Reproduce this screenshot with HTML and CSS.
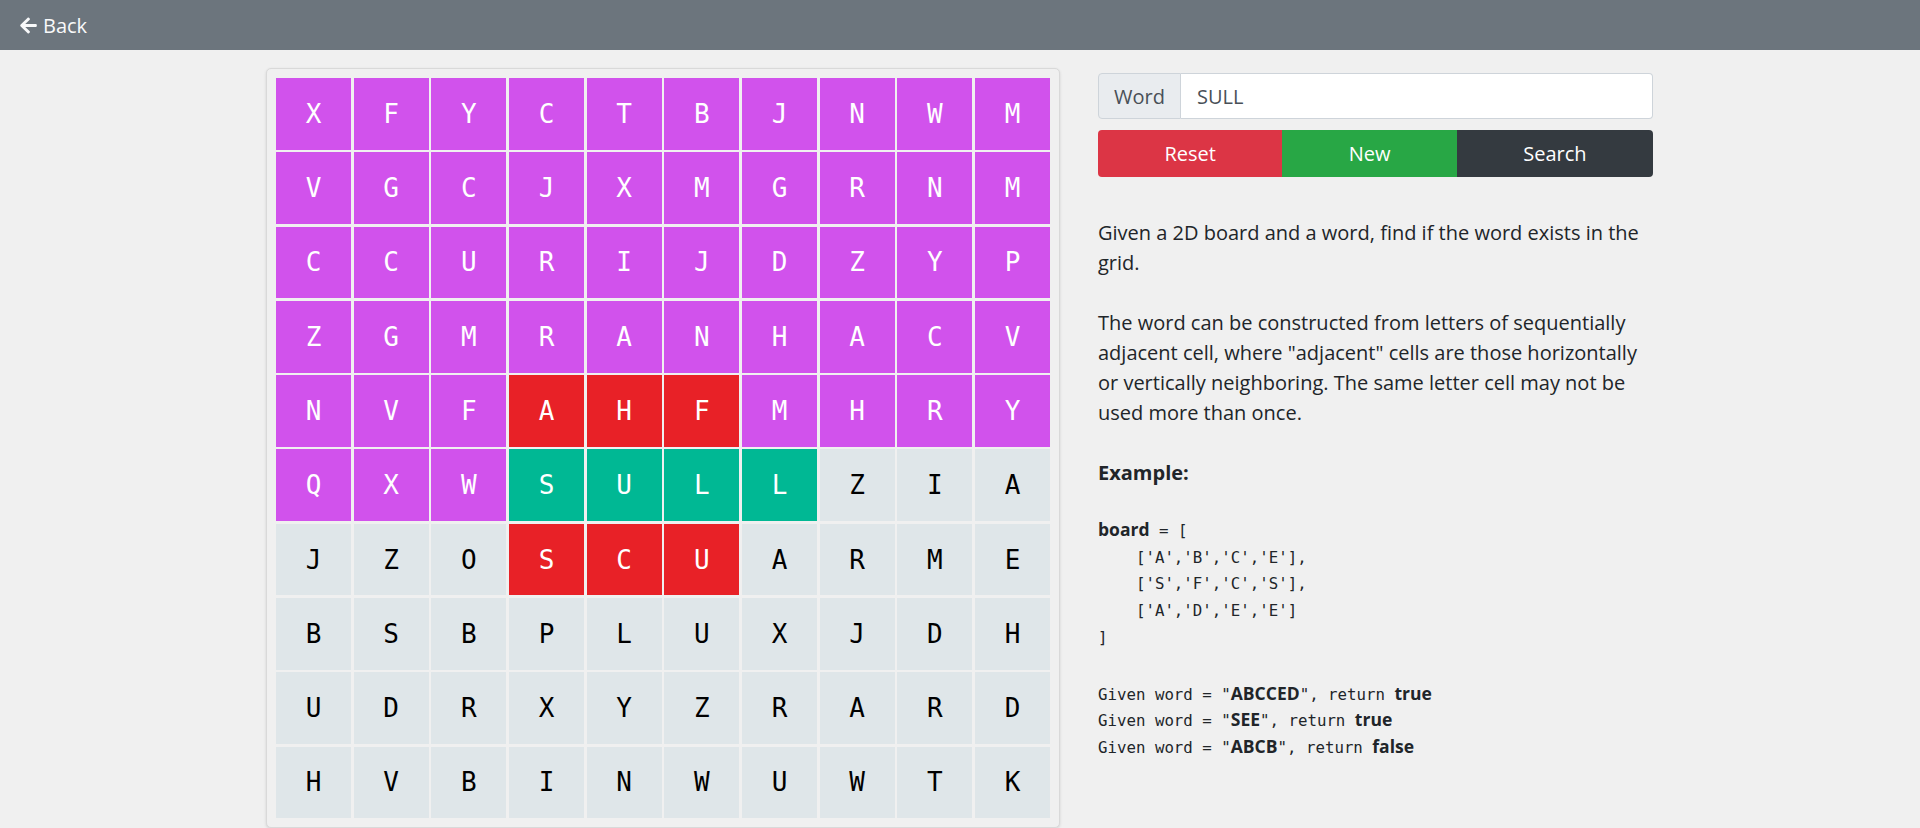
FILE: index.html
```html
<!DOCTYPE html>
<html lang="en">
<head>
<meta charset="utf-8">
<title>Word Search</title>
<link rel="stylesheet" href="styles.css">
</head>
<body>
<nav class="navbar">
  <a class="back" href="#"><svg class="back-icon" viewBox="0 0 448 512" aria-hidden="true"><path d="M257.5 445.1l-22.2 22.2c-9.4 9.4-24.6 9.4-33.9 0L7 273c-9.4-9.4-9.4-24.6 0-33.9L201.4 44.7c9.4-9.4 24.6-9.4 33.9 0l22.2 22.2c9.5 9.5 9.3 25-.4 34.3L136.6 216H424c13.3 0 24 10.7 24 24v32c0 13.3-10.7 24-24 24H136.6l120.5 114.8c9.8 9.3 10 24.8.4 34.3z"/></svg>Back</a>
</nav>
<main class="main">
  <section class="board-card">
    <div class="board">
      <div class="cell p">X</div><div class="cell p">F</div><div class="cell p">Y</div><div class="cell p">C</div><div class="cell p">T</div><div class="cell p">B</div><div class="cell p">J</div><div class="cell p">N</div><div class="cell p">W</div><div class="cell p">M</div>
      <div class="cell p">V</div><div class="cell p">G</div><div class="cell p">C</div><div class="cell p">J</div><div class="cell p">X</div><div class="cell p">M</div><div class="cell p">G</div><div class="cell p">R</div><div class="cell p">N</div><div class="cell p">M</div>
      <div class="cell p">C</div><div class="cell p">C</div><div class="cell p">U</div><div class="cell p">R</div><div class="cell p">I</div><div class="cell p">J</div><div class="cell p">D</div><div class="cell p">Z</div><div class="cell p">Y</div><div class="cell p">P</div>
      <div class="cell p">Z</div><div class="cell p">G</div><div class="cell p">M</div><div class="cell p">R</div><div class="cell p">A</div><div class="cell p">N</div><div class="cell p">H</div><div class="cell p">A</div><div class="cell p">C</div><div class="cell p">V</div>
      <div class="cell p">N</div><div class="cell p">V</div><div class="cell p">F</div><div class="cell r">A</div><div class="cell r">H</div><div class="cell r">F</div><div class="cell p">M</div><div class="cell p">H</div><div class="cell p">R</div><div class="cell p">Y</div>
      <div class="cell p">Q</div><div class="cell p">X</div><div class="cell p">W</div><div class="cell g">S</div><div class="cell g">U</div><div class="cell g">L</div><div class="cell g">L</div><div class="cell">Z</div><div class="cell">I</div><div class="cell">A</div>
      <div class="cell">J</div><div class="cell">Z</div><div class="cell">O</div><div class="cell r">S</div><div class="cell r">C</div><div class="cell r">U</div><div class="cell">A</div><div class="cell">R</div><div class="cell">M</div><div class="cell">E</div>
      <div class="cell">B</div><div class="cell">S</div><div class="cell">B</div><div class="cell">P</div><div class="cell">L</div><div class="cell">U</div><div class="cell">X</div><div class="cell">J</div><div class="cell">D</div><div class="cell">H</div>
      <div class="cell">U</div><div class="cell">D</div><div class="cell">R</div><div class="cell">X</div><div class="cell">Y</div><div class="cell">Z</div><div class="cell">R</div><div class="cell">A</div><div class="cell">R</div><div class="cell">D</div>
      <div class="cell">H</div><div class="cell">V</div><div class="cell">B</div><div class="cell">I</div><div class="cell">N</div><div class="cell">W</div><div class="cell">U</div><div class="cell">W</div><div class="cell">T</div><div class="cell">K</div>
    </div>
  </section>
  <section class="side">
    <div class="input-group">
      <span class="input-label">Word</span>
      <input class="input-field" type="text" value="SULL">
    </div>
    <div class="btn-group">
      <button class="btn btn-reset">Reset</button>
      <button class="btn btn-new">New</button>
      <button class="btn btn-search">Search</button>
    </div>
    <p class="desc desc-first">Given a 2D board and a word, find if the word exists in the grid.</p>
    <p class="desc">The word can be constructed from letters of sequentially adjacent cell, where "adjacent" cells are those horizontally or vertically neighboring. The same letter cell may not be used more than once.</p>
    <p class="desc"><strong>Example:</strong></p>
<pre class="code"><strong>board</strong> = [
    ['A','B','C','E'],
    ['S','F','C','S'],
    ['A','D','E','E']
]</pre>
<pre class="code code-results">Given word = "<strong>ABCCED</strong>", return <strong>true</strong>
Given word = "<strong>SEE</strong>", return <strong>true</strong>
Given word = "<strong>ABCB</strong>", return <strong>false</strong></pre>
  </section>
</main>
</body>
</html>
```
FILE: styles.css
```css
* { box-sizing: border-box; }

body {
  margin: 0;
  background: #f0f0f0;
  font-family: "Open Sans", "Liberation Sans", sans-serif;
  font-size: 20px;
  color: #212529;
}

.navbar {
  height: 50px;
  background: #6c757d;
  display: flex;
  align-items: center;
  padding: 0 20px;
}

.back {
  display: flex;
  align-items: center;
  color: #f8f9fa;
  text-decoration: none;
  font-size: 20px;
}

.back-icon {
  width: 17px;
  height: 19px;
  fill: #f8f9fa;
  margin-right: 6px;
}

.main {
  display: flex;
  align-items: flex-start;
  padding: 18px 0 0 266px;
  gap: 38px;
}

.board-card {
  width: 794px;
  padding: 9px;
  border: 1px solid #d9d9d9;
  border-radius: 5px;
  box-shadow: 0 1px 3px rgba(0, 0, 0, 0.12);
  background: #f0f0f0;
}

.board {
  display: grid;
  grid-template-columns: repeat(10, 1fr);
  grid-auto-rows: 71.7px;
  gap: 2.6px;
}

.cell {
  display: flex;
  align-items: center;
  justify-content: center;
  background: #dfe6e9;
  color: #000;
  font-family: "DejaVu Sans Mono", "Liberation Mono", monospace;
  font-size: 26px;
}

.cell.p { background: #d152ec; color: #fff; }
.cell.r { background: #e82127; color: #fff; }
.cell.g { background: #00b894; color: #fff; }

.side {
  width: 555px;
  margin-top: 5px;
}

.input-group {
  display: flex;
  height: 46px;
}

.input-label {
  display: flex;
  align-items: center;
  padding: 0 15px;
  background: #e9ecef;
  border: 1px solid #ced4da;
  border-radius: 4px 0 0 4px;
  color: #495057;
}

.input-field {
  flex: 1;
  min-width: 0;
  border: 1px solid #ced4da;
  border-left: none;
  border-radius: 0 4px 4px 0;
  background: #fff;
  padding: 0 16px;
  font: inherit;
  color: #495057;
}

.btn-group {
  display: flex;
  margin-top: 11px;
  height: 47px;
}

.btn {
  flex: 1 1 auto;
  border: none;
  padding: 0;
  font: inherit;
  color: #fff;
}

.btn-reset { background: #dc3545; border-radius: 4px 0 0 4px; }
.btn-new { background: #28a745; }
.btn-search { background: #343a40; border-radius: 0 4px 4px 0; }

.desc {
  margin: 0 0 30px;
  line-height: 30px;
}

.desc-first { margin-top: 41px; }

.code {
  margin: 0;
  font-family: "DejaVu Sans Mono", "Liberation Mono", monospace;
  font-size: 15.75px;
  line-height: 26.7px;
  color: #212529;
}

.code-results { margin-top: 30px; }

.code strong {
  font-family: "Open Sans", "Liberation Sans", sans-serif;
  font-size: 17.5px;
  line-height: 1;
  font-weight: 700;
}
```
